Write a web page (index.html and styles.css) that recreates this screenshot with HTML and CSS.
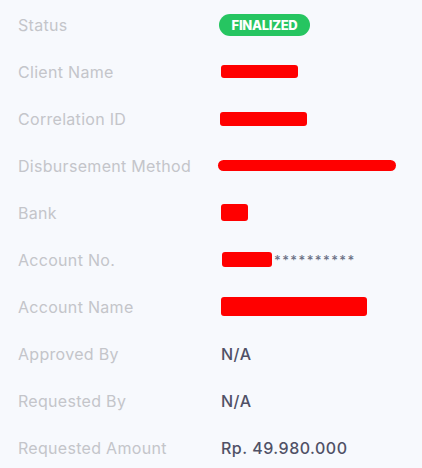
FILE: index.html
```html
<!DOCTYPE html>
<html lang="en">
  <head>
    <meta charset="UTF-8" />
    <meta name="viewport" content="width=device-width, initial-scale=1.0" />
    <title>Disbursement Detail</title>
    <link rel="stylesheet" href="styles.css">
  </head>
  <body>
    <div class="details">
      <div class="row">
        <p class="label">Status</p>
        <div class="value"><span class="badge">FINALIZED</span></div>
      </div>
      <div class="row">
        <p class="label">Client Name</p>
        <div class="value"><span class="redact redact-client"></span></div>
      </div>
      <div class="row">
        <p class="label">Correlation ID</p>
        <div class="value"><span class="redact redact-corr"></span></div>
      </div>
      <div class="row">
        <p class="label">Disbursement Method</p>
        <div class="value"><span class="redact redact-method"></span></div>
      </div>
      <div class="row">
        <p class="label">Bank</p>
        <div class="value"><span class="redact redact-bank"></span></div>
      </div>
      <div class="row">
        <p class="label">Account No.</p>
        <div class="value"><span class="redact redact-accno"></span><span class="mask">**********</span></div>
      </div>
      <div class="row">
        <p class="label">Account Name</p>
        <div class="value"><span class="redact redact-accname"></span></div>
      </div>
      <div class="row">
        <p class="label">Approved By</p>
        <div class="value">N/A</div>
      </div>
      <div class="row">
        <p class="label">Requested By</p>
        <div class="value">N/A</div>
      </div>
      <div class="row">
        <p class="label">Requested Amount</p>
        <div class="value">Rp. 49.980.000</div>
      </div>
    </div>
  </body>
</html>
```

FILE: styles.css
```css
* {
  margin: 0;
  padding: 0;
  box-sizing: border-box;
}

body {
  font-family: Inter, "Noto Sans", sans-serif;
  background-color: #f7f9fd;
  padding: 1px 18px 0 18px;
}

.row {
  display: grid;
  grid-template-columns: 203px 1fr;
  align-items: center;
  height: 47px;
}

.label {
  color: #c4c5ca;
  font-size: 16px;
  letter-spacing: 0.3px;
}

.value {
  display: flex;
  align-items: center;
  color: #505166;
  font-size: 16px;
  font-weight: 500;
  letter-spacing: 0.5px;
}

.badge {
  display: inline-block;
  background-color: #26c561;
  color: #ffffff;
  font-size: 13px;
  font-weight: 800;
  letter-spacing: -0.3px;
  width: 91px;
  height: 22px;
  line-height: 22px;
  text-align: center;
  border-radius: 11px;
  margin-left: -2px;
}

.redact {
  display: inline-block;
  background-color: #ff0000;
  border-radius: 3px;
}

.redact-client {
  width: 77px;
  height: 13px;
}

.redact-corr {
  width: 87px;
  height: 14px;
  margin-left: -1px;
}

.redact-method {
  width: 178px;
  height: 11px;
  border-radius: 6px;
  margin-left: -3px;
}

.redact-bank {
  width: 27px;
  height: 17px;
}

.redact-accno {
  width: 50px;
  height: 15px;
  margin-left: 1px;
}

.redact-accname {
  width: 146px;
  height: 19px;
}

.mask {
  margin-left: 2px;
  color: #6b7185;
  font-size: 13px;
  letter-spacing: 1.4px;
}
```
